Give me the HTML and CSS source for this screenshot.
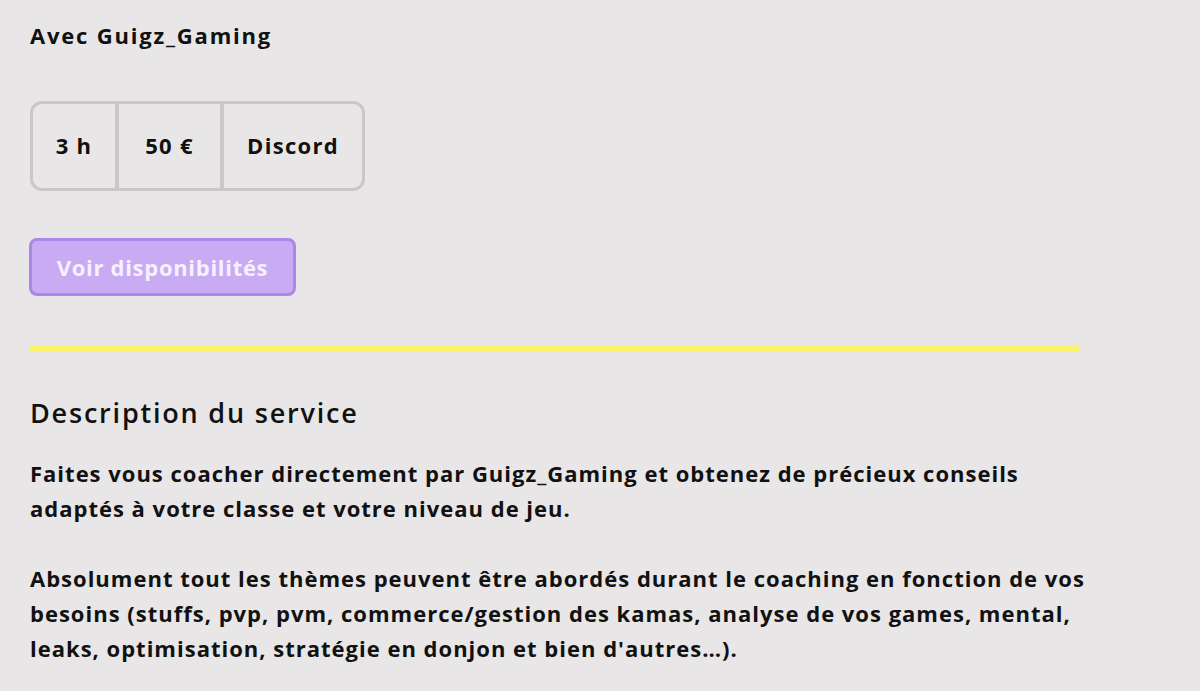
FILE: index.html
```html
<!DOCTYPE html>
<html lang="fr">
<head>
<meta charset="utf-8">
<title>Coaching</title>
<link rel="stylesheet" href="styles.css">
</head>
<body>
<main class="page">
  <p class="coach">Avec Guigz_Gaming</p>
  <div class="infos">
    <div class="info info-duree">3 h</div>
    <div class="info info-prix">50 €</div>
    <div class="info info-lieu">Discord</div>
  </div>
  <button class="btn-dispo" type="button">Voir disponibilités</button>
  <hr class="sep">
  <h2 class="title">Description du service</h2>
  <p class="desc">Faites vous coacher directement par Guigz_Gaming et obtenez de précieux conseils<br>adaptés à votre classe et votre niveau de jeu.</p>
  <p class="desc desc-2">Absolument tout les thèmes peuvent être abordés durant le coaching en fonction de vos<br>besoins (stuffs, pvp, pvm, commerce/gestion des kamas, analyse de vos games, mental,<br>leaks, optimisation, stratégie en donjon et bien d'autres…).</p>
</main>
</body>
</html>
```
FILE: styles.css
```css
html, body {
  margin: 0;
  padding: 0;
  background: #e8e6e7;
}
body {
  font-family: "Open Sans", "Liberation Sans", sans-serif;
  color: #111111;
}
.page {
  width: 1050px;
  padding: 20px 30px 0 30px;
  display: flex;
  flex-direction: column;
  align-items: flex-start;
}
.coach {
  margin: 0;
  font-size: 22px;
  font-weight: 700;
  line-height: 30px;
  letter-spacing: 1.8px;
}
.infos {
  margin-top: 51px;
  display: flex;
  box-sizing: border-box;
  height: 90px;
  border: 3px solid #c9c7c8;
  border-radius: 12px;
}
.info {
  display: flex;
  align-items: center;
  justify-content: center;
  padding-bottom: 2px;
  font-size: 22px;
  font-weight: 700;
  letter-spacing: 1.3px;
}
.info + .info {
  border-left: 4px solid #c9c7c8;
}
.info-duree { width: 82px; }
.info-prix { width: 101px; }
.info-lieu { width: 138px; }
.btn-dispo {
  margin: 47px 0 0 -1px;
  box-sizing: border-box;
  width: 267px;
  height: 58px;
  padding: 0;
  background: #c9abf4;
  border: 3px solid #a988e9;
  border-radius: 8px;
  color: #f6f1fe;
  font-family: inherit;
  font-size: 22px;
  font-weight: 700;
  letter-spacing: 0.7px;
}
.sep {
  margin: 49px 0 0 0;
  width: 1050px;
  height: 6px;
  border: 0;
  background: #fcf46a;
}
.title {
  margin: 42px 0 0 0;
  font-size: 27px;
  font-weight: 600;
  line-height: 40px;
  letter-spacing: 1.8px;
}
.desc {
  margin: 23px 0 0 0;
  font-size: 22px;
  font-weight: 700;
  line-height: 35px;
  letter-spacing: 1px;
  white-space: nowrap;
}
.desc-2 {
  margin-top: 35px;
}
```
